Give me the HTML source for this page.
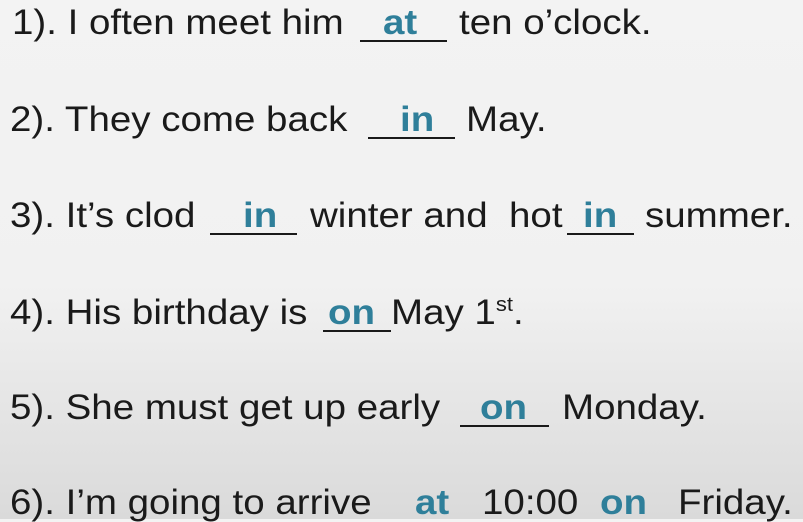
<!DOCTYPE html>
<html><head><style>
body{margin:0;width:803px;height:519px;overflow:hidden;background:linear-gradient(#f3f3f3 0%,#f1f1f1 55%,#dadada 100%);font-family:"Liberation Sans",Arial,sans-serif;}
.s{position:absolute;font-size:35px;line-height:32px;color:#1a1a1a;white-space:pre;transform:scaleX(1.1);transform-origin:0 0;}
.a{position:absolute;font-size:35px;line-height:32px;color:#2f7f9a;font-weight:bold;transform:scaleX(1.1);transform-origin:0 0;}
.u{position:absolute;height:2px;background:#1a1a1a;}
.sp{font-size:20px;position:relative;top:-13px;}
</style></head><body>
<div class="s" style="left:12px;top:7px">1). I often meet him</div>
<div class="u" style="left:360px;top:40px;width:87px"></div>
<div class="a" style="left:383px;top:7px">at</div>
<div class="s" style="left:459px;top:7px">ten o’clock.</div>

<div class="s" style="left:10px;top:104px">2). They come back</div>
<div class="u" style="left:368px;top:137px;width:87px"></div>
<div class="a" style="left:400px;top:104px">in</div>
<div class="s" style="left:466px;top:104px">May.</div>

<div class="s" style="left:10px;top:200px">3). It’s clod</div>
<div class="u" style="left:210px;top:233px;width:87px"></div>
<div class="a" style="left:243px;top:200px">in</div>
<div class="s" style="left:310px;top:200px">winter and  hot</div>
<div class="u" style="left:567px;top:233px;width:67px"></div>
<div class="a" style="left:583px;top:200px">in</div>
<div class="s" style="left:645px;top:200px">summer.</div>

<div class="s" style="left:10px;top:297px">4). His birthday is</div>
<div class="u" style="left:323px;top:330px;width:68px"></div>
<div class="a" style="left:328px;top:297px">on</div>
<div class="s" style="left:391px;top:297px">May 1<span class="sp">st</span>.</div>

<div class="s" style="left:10px;top:392px">5). She must get up early</div>
<div class="u" style="left:460px;top:425px;width:89px"></div>
<div class="a" style="left:480px;top:392px">on</div>
<div class="s" style="left:562px;top:392px">Monday.</div>

<div class="s" style="left:10px;top:487px">6). I’m going to arrive</div>
<div class="a" style="left:415px;top:487px">at</div>
<div class="s" style="left:482px;top:487px">10:00</div>
<div class="a" style="left:600px;top:487px">on</div>
<div class="s" style="left:678px;top:487px">Friday.</div>
</body></html>
